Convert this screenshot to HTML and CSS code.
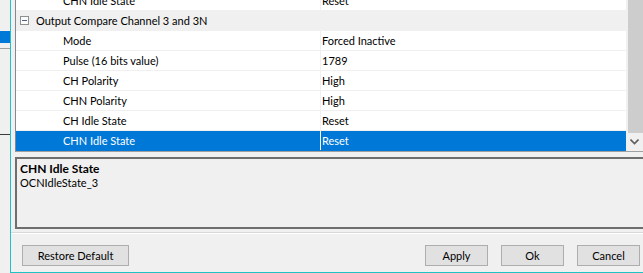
FILE: index.html
```html
<!DOCTYPE html>
<html lang="en">
<head>
  <meta charset="UTF-8">
  <title>Parameter Settings</title>
  <link rel="stylesheet" href="styles.css">
</head>
<body>
  <div class="screen">
    <div class="backdrop">
      <div class="bd-sel"></div>
      <div class="bd-line"></div>
      <div class="bd-dark"></div>
    </div>

    <div class="dialog">
      <div class="tree">
        <div class="tree-rows">
          <div class="row"><span class="name">CHN Idle State</span><span class="value">Reset</span></div>
          <div class="row group"><span class="toggle"></span>Output Compare Channel 3 and 3N</div>
          <div class="row"><span class="name">Mode</span><span class="value">Forced Inactive</span></div>
          <div class="row"><span class="name">Pulse (16 bits value)</span><span class="value">1789</span></div>
          <div class="row"><span class="name">CH Polarity</span><span class="value">High</span></div>
          <div class="row"><span class="name">CHN Polarity</span><span class="value">High</span></div>
          <div class="row"><span class="name">CH Idle State</span><span class="value">Reset</span></div>
          <div class="row selected"><span class="name">CHN Idle State</span><span class="value">Reset</span></div>
        </div>
        <div class="scrollbar">
          <div class="thumb"></div>
          <div class="arrow">
            <svg width="9" height="6" viewBox="0 0 9 6"><path d="M0.5 0.5 L4.5 4.5 L8.5 0.5" fill="none" stroke="#606060" stroke-width="1.6"/></svg>
          </div>
        </div>
      </div>

      <div class="desc">
        <div class="desc-title">CHN Idle State</div>
        <div class="desc-text">OCNIdleState_3</div>
      </div>

      <div class="separator"></div>

      <div class="footer">
        <button class="btn btn-wide">Restore Default</button>
        <div class="btn-group">
          <button class="btn">Apply</button>
          <button class="btn">Ok</button>
          <button class="btn">Cancel</button>
        </div>
      </div>
    </div>
  </div>
</body>
</html>
```

FILE: styles.css
```css
* {
  margin: 0;
  padding: 0;
  box-sizing: border-box;
}

body {
  font-family: 'Lato', 'Liberation Sans', sans-serif;
  font-size: 11px;
  color: #000000;
  background-color: #f0f0f0;
  overflow: hidden;
}

.screen {
  display: flex;
  width: 643px;
  height: 273px;
}

/* window behind the dialog */
.backdrop {
  width: 10px;
  flex-shrink: 0;
  background-color: #f0f0f0;
  padding-top: 31px;
}

.bd-sel {
  height: 12px;
  background-color: #0078d7;
}

.bd-line {
  height: 1px;
  margin-top: 5px;
  background-color: #a0a0a0;
}

.bd-dark {
  height: 1px;
  margin-top: 85px;
  background-color: #3c3c3c;
}

.dialog {
  flex: 1;
  display: flex;
  flex-direction: column;
  border-left: 1px solid #1fc3c3;
  border-bottom: 1px solid #1fc3c3;
  padding-left: 4px;
  overflow: hidden;
}

.tree {
  display: flex;
  height: 152px;
  flex-shrink: 0;
  background-color: #ffffff;
  border-left: 1px solid #828790;
  border-bottom: 1px solid #a0a0a0;
  overflow: hidden;
}

.tree-rows {
  flex: 1;
  margin-top: -9px;
}

.row {
  display: flex;
  height: 20px;
  line-height: 19px;
  border-bottom: 1px solid #f0f0f0;
}

.row .name {
  width: 305px;
  padding-left: 47px;
  border-right: 1px solid #f0f0f0;
  white-space: nowrap;
}

.row .value {
  flex: 1;
  padding-left: 1px;
}

.row.group {
  align-items: center;
  background-color: #f0f0f0;
  padding-left: 4px;
}

.toggle {
  position: relative;
  width: 9px;
  height: 9px;
  margin-right: 7px;
  border: 1px solid #8e8f8f;
  background-color: #fcfcfc;
}

.toggle::after {
  content: "";
  position: absolute;
  left: 1px;
  top: 3px;
  width: 5px;
  height: 1px;
  background-color: #4d6185;
}

.row.selected {
  background-color: #0078d7;
  color: #ffffff;
  border-bottom-color: #0078d7;
}

.row.selected .name {
  border-right-color: #ffffff;
}

.scrollbar {
  width: 17px;
  display: flex;
  flex-direction: column;
  background-color: #f0f0f0;
  padding-left: 2px;
}

.thumb {
  flex: 1;
  background-color: #cdcdcd;
}

.arrow {
  height: 18px;
  display: flex;
  align-items: center;
  justify-content: center;
  padding-right: 2px;
}

.desc {
  height: 72px;
  margin-top: 5px;
  margin-right: -4px;
  padding: 3px 0 0 3px;
  border: 2px solid #6e6e6e;
  line-height: 13px;
  flex-shrink: 0;
}

.desc-title {
  font-size: 12px;
  line-height: 14px;
  font-weight: 700;
}

.separator {
  height: 2px;
  margin-top: 3px;
  margin-left: -4px;
  border-top: 1px solid #d8d8d8;
  border-bottom: 1px solid #ffffff;
}

.footer {
  display: flex;
  justify-content: space-between;
  margin-top: 11px;
  padding: 0 3px 0 7px;
}

.btn-group {
  display: flex;
  gap: 13px;
}

.btn {
  width: 63px;
  height: 21px;
  font-family: inherit;
  font-size: 11px;
  color: #000000;
  background-color: #e1e1e1;
  border: 1px solid #adadad;
}

.btn-wide {
  width: 107px;
}
```
